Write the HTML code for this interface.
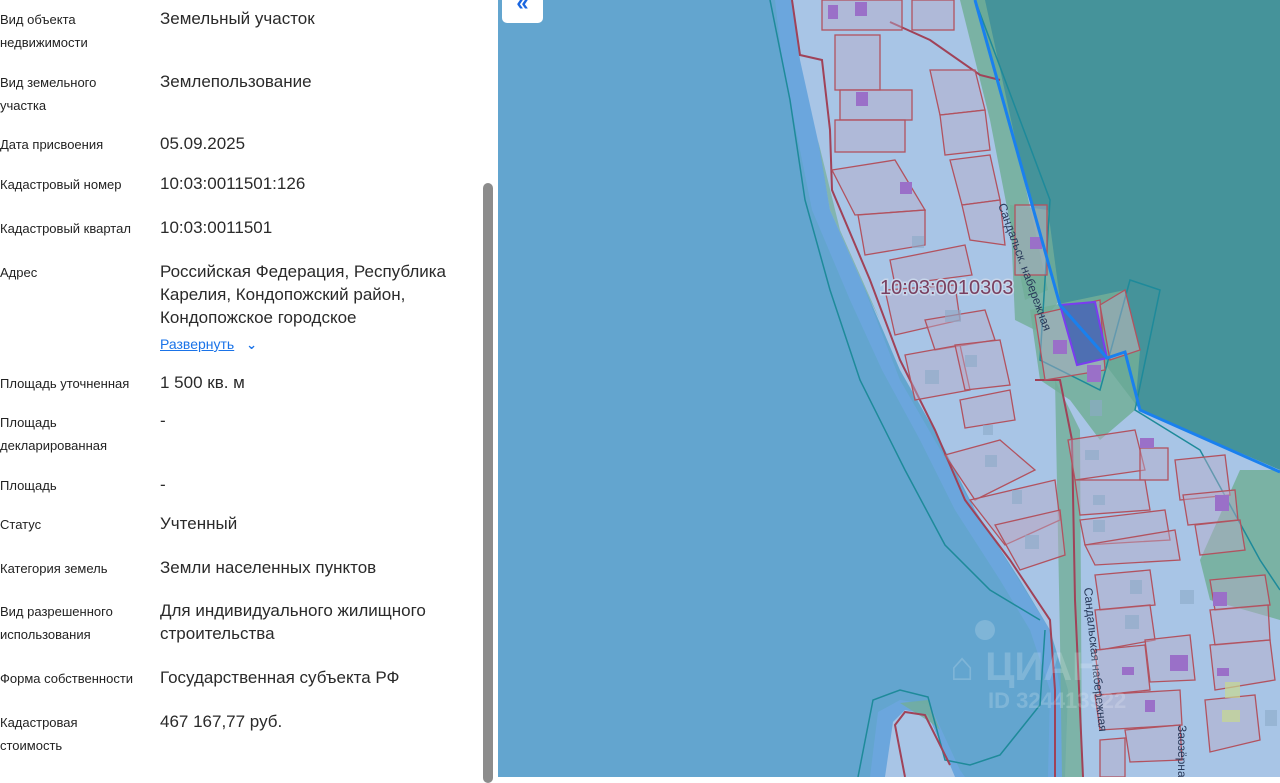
<!DOCTYPE html>
<html><head><meta charset="utf-8"><style>
html,body{margin:0;padding:0;width:1280px;height:777px;overflow:hidden;background:#fff;font-family:"Liberation Sans","DejaVu Sans",sans-serif}
.l{position:absolute;left:0;font-size:13px;color:#222;line-height:23px}
.v{position:absolute;left:160px;font-size:17px;color:#2a2a2a;line-height:23px}
#sb{position:absolute;left:483px;top:183px;width:10px;height:600px;background:#8c8c8c;border-radius:5px}
#map{position:absolute;left:498px;top:0;width:782px;height:777px;background:#63a5cf}
#btn{position:absolute;left:502px;top:-6px;width:41px;height:29px;background:#fff;border-radius:5px;color:#1a66e0;font-size:22px;text-align:center;line-height:18px;font-weight:bold}
</style></head><body>
<div class="l" style="top:8px">Вид объекта<br>недвижимости</div><div class="v" style="top:7px">Земельный участок</div>
<div class="l" style="top:71px">Вид земельного<br>участка</div><div class="v" style="top:70px">Землепользование</div>
<div class="l" style="top:133px">Дата присвоения</div><div class="v" style="top:132px">05.09.2025</div>
<div class="l" style="top:173px">Кадастровый номер</div><div class="v" style="top:172px">10:03:0011501:126</div>
<div class="l" style="top:217px">Кадастровый квартал</div><div class="v" style="top:216px">10:03:0011501</div>
<div class="l" style="top:261px">Адрес</div><div class="v" style="top:260px">Российская Федерация, Республика<br>Карелия, Кондопожский район,<br>Кондопожское городское</div>
<div class="v" style="top:333px;font-size:14px;color:#1a73e8"><span style="text-decoration:underline">Развернуть</span> <span style="display:inline-block;margin-left:8px;font-size:13px;font-weight:bold">&#8964;</span></div>
<div class="l" style="top:372px">Площадь уточненная</div><div class="v" style="top:371px">1 500 кв. м</div>
<div class="l" style="top:411px">Площадь<br>декларированная</div><div class="v" style="top:409px">-</div>
<div class="l" style="top:474px">Площадь</div><div class="v" style="top:473px">-</div>
<div class="l" style="top:513px">Статус</div><div class="v" style="top:512px">Учтенный</div>
<div class="l" style="top:557px">Категория земель</div><div class="v" style="top:556px">Земли населенных пунктов</div>
<div class="l" style="top:600px">Вид разрешенного<br>использования</div><div class="v" style="top:599px">Для индивидуального жилищного<br>строительства</div>
<div class="l" style="top:667px">Форма собственности</div><div class="v" style="top:666px">Государственная субъекта РФ</div>
<div class="l" style="top:711px">Кадастровая<br>стоимость</div><div class="v" style="top:710px">467 167,77 руб.</div>
<div id="sb"></div>
<div id="map"><svg width="782" height="777" viewBox="498 0 782 777" xmlns="http://www.w3.org/2000/svg">
<polygon fill="#45939a" points="975,0 1280,0 1280,470 1140,410 1060,305"/>
<polygon fill="#6ba6dd" points="775,0 795,0 830,200 900,380 975,510 1050,630 1075,777 1048,777 1050,690 1030,630 1000,580 955,510 920,440 882,370 850,300 812,210 800,150 782,60"/>
<polygon fill="#a8c5e6" points="792,0 975,0 1060,305 1140,410 1280,470 1280,777 1065,777 1068,690 1050,630 1020,580 975,510 940,440 900,370 870,300 830,210 820,150 800,60"/>
<polygon fill="#72ae98" opacity=".85" points="960,0 985,0 1048,290 1025,300 990,120"/>
<polygon fill="#72ae98" opacity=".8" points="1010,205 1048,210 1060,300 1035,330 1015,320"/>
<polygon fill="#72ae98" opacity=".85" points="1030,310 1125,290 1140,350 1135,410 1100,440 1070,400 1040,380"/>
<polygon fill="#72ae98" opacity=".8" points="1055,380 1080,430 1082,777 1062,777 1060,640"/>
<polygon fill="#72ae98" opacity=".85" points="1200,560 1240,470 1280,470 1280,620 1210,600"/>
<polygon fill="#72ae98" opacity=".7" points="818,140 830,210 870,300 880,320 840,230"/>
<polygon fill="#6ba6dd" points="870,777 878,712 900,700 930,705 960,770 965,777"/>
<polygon fill="#a8c5e6" points="885,777 893,722 905,710 928,715 950,765 955,777"/>
<polygon fill="#72ae98" opacity=".8" points="900,703 928,700 940,730 930,722"/>
<polyline fill="none" stroke="#1e8a9a" stroke-width="1.5" points="770,0 790,100 805,200 830,290 860,380 905,470 945,545 990,590 1040,620"/>
<polyline fill="none" stroke="#1e8a9a" stroke-width="1.5" points="858,777 873,700 900,690 928,697 945,760 970,765 1000,755 1040,705 1045,630"/>
<polyline fill="none" stroke="#1e8a9a" stroke-width="1.5" points="975,0 1050,200 1040,360 1100,390 1130,280 1160,290 1135,410 1200,450 1260,560 1280,590"/>
<g fill="none" stroke="#a04258" stroke-width="2">
<polyline points="792,0 800,55 822,60 830,130 832,190 870,280 900,360 935,430 965,500 1010,560 1050,620 1055,690 1055,777"/>
<polyline points="1035,380 1060,380 1072,440 1075,600 1083,777"/>
<polyline points="905,777 895,725 905,712 925,715 950,765"/>
<polyline points="890,22 930,40 980,75 1000,80"/>
</g>
<g fill="rgba(185,170,200,.45)" stroke="#b2525f" stroke-width="1.3">
<rect x="822" y="0" width="80" height="30"/><rect x="835" y="35" width="45" height="55"/><rect x="840" y="90" width="72" height="30"/><rect x="835" y="120" width="70" height="32"/><rect x="912" y="0" width="42" height="30"/>
<polygon points="930,70 975,70 985,110 940,115"/><polygon points="940,115 985,110 990,150 945,155"/>
<polygon points="832,170 895,160 925,210 855,215"/><polygon points="858,215 925,210 925,245 865,255"/>
<polygon points="950,160 990,155 1000,200 962,205"/><polygon points="962,205 1000,200 1005,245 970,240"/>
<polygon points="890,260 965,245 972,275 895,285"/><polygon points="885,290 955,285 960,320 895,335"/>
<polygon points="925,320 985,310 995,340 935,350"/><polygon points="905,355 960,345 970,390 915,400"/>
<polygon points="955,345 1000,340 1010,385 965,390"/><polygon points="960,400 1010,390 1015,420 965,428"/>
<polygon points="945,455 1000,440 1035,470 975,500"/><polygon points="970,500 1055,480 1060,520 1005,545"/>
<polygon points="995,525 1060,510 1065,555 1020,570"/><polygon points="1068,440 1135,430 1145,470 1075,480"/>
<rect x="1140" y="448" width="28" height="32"/><polygon points="1075,480 1145,480 1150,510 1080,515"/>
<polygon points="1080,520 1165,510 1170,540 1085,545"/><polygon points="1085,545 1175,530 1180,560 1095,565"/>
<polygon points="1175,460 1225,455 1230,495 1180,500"/><polygon points="1183,495 1235,490 1238,520 1188,525"/>
<polygon points="1195,525 1240,520 1245,550 1200,555"/><polygon points="1210,580 1265,575 1270,605 1215,610"/>
<polygon points="1210,610 1268,605 1270,640 1215,645"/><polygon points="1210,645 1270,640 1275,680 1215,690"/>
<polygon points="1205,700 1255,695 1260,740 1210,752"/><polygon points="1095,575 1150,570 1155,605 1100,610"/>
<polygon points="1095,610 1150,605 1155,640 1100,650"/><polygon points="1145,640 1190,635 1195,680 1150,682"/>
<polygon points="1095,650 1145,645 1150,690 1100,695"/><polygon points="1095,695 1180,690 1182,725 1100,730"/>
<polygon points="1125,730 1180,725 1182,760 1130,762"/><polygon points="1100,740 1125,738 1125,777 1100,777"/>
<polygon points="1035,315 1100,300 1105,370 1045,380"/><polygon points="1100,305 1125,290 1140,350 1110,360"/>
<rect x="1015" y="205" width="32" height="70"/>
</g>
<polygon fill="#4e6fb2" stroke="#7a3cf0" stroke-width="2" points="1060,305 1095,302 1107,358 1077,365"/>
<g fill="#9a70c8"><rect x="828" y="5" width="10" height="14"/><rect x="855" y="2" width="12" height="14"/><rect x="856" y="92" width="12" height="14"/><rect x="900" y="182" width="12" height="12"/><rect x="1030" y="237" width="12" height="12"/><rect x="1053" y="340" width="14" height="14"/><rect x="1087" y="365" width="14" height="17"/><rect x="1140" y="438" width="14" height="10"/><rect x="1215" y="495" width="14" height="16"/><rect x="1213" y="592" width="14" height="14"/><rect x="1170" y="655" width="18" height="16"/><rect x="1122" y="667" width="12" height="8"/><rect x="1217" y="668" width="12" height="8"/><rect x="1145" y="700" width="10" height="12"/></g>
<g fill="rgba(140,170,200,.6)"><rect x="912" y="236" width="12" height="12"/><rect x="945" y="310" width="16" height="12"/><rect x="925" y="370" width="14" height="14"/><rect x="965" y="355" width="12" height="12"/><rect x="983" y="425" width="10" height="10"/><rect x="985" y="455" width="12" height="12"/><rect x="1012" y="490" width="10" height="14"/><rect x="1025" y="535" width="14" height="14"/><rect x="1085" y="450" width="14" height="10"/><rect x="1090" y="400" width="12" height="16"/><rect x="1093" y="495" width="12" height="10"/><rect x="1093" y="520" width="12" height="12"/><rect x="1130" y="580" width="12" height="14"/><rect x="1180" y="590" width="14" height="14"/><rect x="1125" y="615" width="14" height="14"/><rect x="1265" y="710" width="12" height="16"/></g>
<polygon fill="#c8d890" opacity=".7" points="1225,682 1240,682 1240,698 1225,698"/>
<polygon fill="#c8d890" opacity=".7" points="1222,710 1240,710 1240,722 1222,722"/>
<text transform="translate(998,205) rotate(70)" font-family="Liberation Sans,sans-serif" font-size="12" fill="#2a3a5a">Сандальск. набережная</text>
<text transform="translate(1084,588) rotate(84)" font-family="Liberation Sans,sans-serif" font-size="12" fill="#2a3a5a">Сандальская набережная</text>
<text transform="translate(1178,725) rotate(90)" font-family="Liberation Sans,sans-serif" font-size="12" fill="#2a3a5a">Заозёрная</text>
<text x="880" y="294" font-family="Liberation Sans,sans-serif" font-size="20" fill="#7a4060" stroke="#c8d6ea" stroke-width="3" paint-order="stroke">10:03:0010303</text>
<polyline fill="none" stroke="#1a80ee" stroke-width="3" points="975,0 1060,305 1107,358 1125,352 1140,410 1280,472"/>
<g fill="#ffffff" opacity=".18"><circle cx="985" cy="630" r="10"/><text x="950" y="680" font-size="40" font-weight="bold" font-family="Liberation Sans,sans-serif">⌂ ЦИАН</text><text x="988" y="708" font-size="22" font-weight="bold" font-family="Liberation Sans,sans-serif">ID 324413922</text></g>
</svg></div>
<div id="btn">«</div>
</body></html>
